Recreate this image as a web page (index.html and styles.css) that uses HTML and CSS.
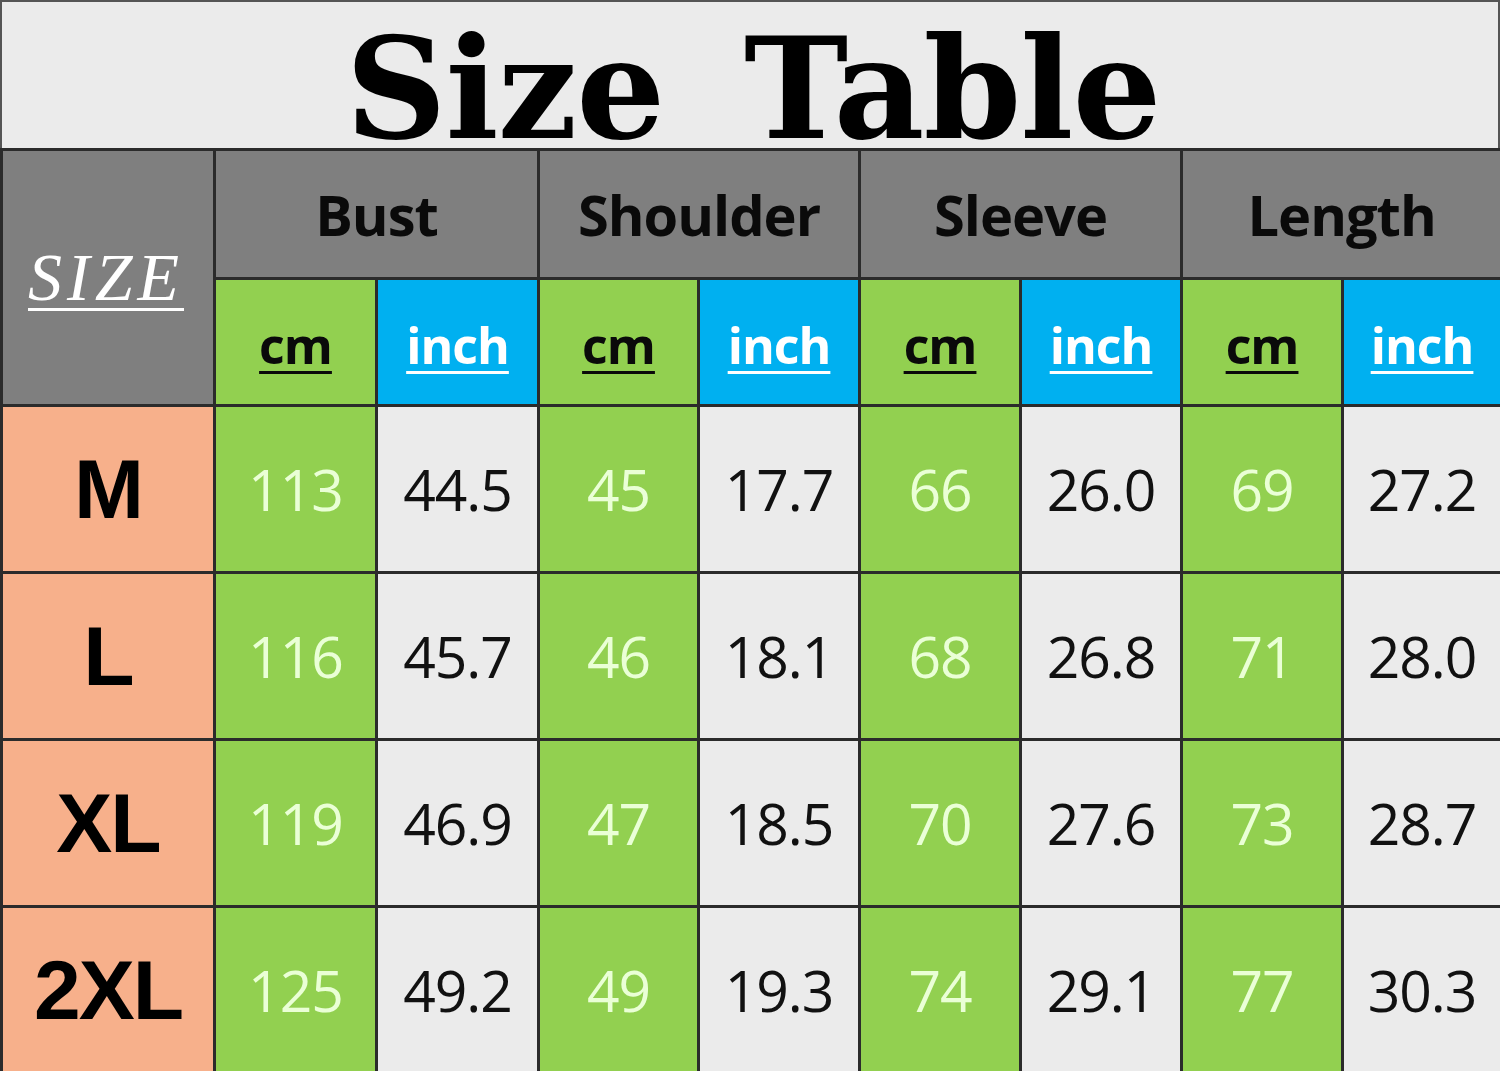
FILE: index.html
```html
<!DOCTYPE html>
<html>
<head>
<meta charset="utf-8">
<link rel="stylesheet" href="styles.css">
</head>
<body>
<div class="sheet">
  <div class="title"><span>Size Table</span></div>
  <table class="sizes">
    <colgroup>
      <col class="c-size">
      <col class="c-a"><col class="c-a"><col class="c-b"><col class="c-c">
      <col class="c-c"><col class="c-c"><col class="c-c"><col class="c-d">
    </colgroup>
    <tr class="head1">
      <th rowspan="2" class="size-h"><span>SIZE</span></th>
      <th colspan="2" class="grp">Bust</th>
      <th colspan="2" class="grp">Shoulder</th>
      <th colspan="2" class="grp">Sleeve</th>
      <th colspan="2" class="grp">Length</th>
    </tr>
    <tr class="head2">
      <th class="unit cm"><span>cm</span></th><th class="unit inch"><span>inch</span></th>
      <th class="unit cm"><span>cm</span></th><th class="unit inch"><span>inch</span></th>
      <th class="unit cm"><span>cm</span></th><th class="unit inch"><span>inch</span></th>
      <th class="unit cm"><span>cm</span></th><th class="unit inch"><span>inch</span></th>
    </tr>
    <tr class="row">
      <th class="lbl">M</th>
      <td class="g">113</td><td class="w">44.5</td><td class="g">45</td><td class="w">17.7</td>
      <td class="g">66</td><td class="w">26.0</td><td class="g">69</td><td class="w">27.2</td>
    </tr>
    <tr class="row">
      <th class="lbl">L</th>
      <td class="g">116</td><td class="w">45.7</td><td class="g">46</td><td class="w">18.1</td>
      <td class="g">68</td><td class="w">26.8</td><td class="g">71</td><td class="w">28.0</td>
    </tr>
    <tr class="row">
      <th class="lbl">XL</th>
      <td class="g">119</td><td class="w">46.9</td><td class="g">47</td><td class="w">18.5</td>
      <td class="g">70</td><td class="w">27.6</td><td class="g">73</td><td class="w">28.7</td>
    </tr>
    <tr class="row">
      <th class="lbl">2XL</th>
      <td class="g">125</td><td class="w">49.2</td><td class="g">49</td><td class="w">19.3</td>
      <td class="g">74</td><td class="w">29.1</td><td class="g">77</td><td class="w">30.3</td>
    </tr>
  </table>
</div>
</body>
</html>
```
FILE: styles.css
```css
html, body {
  margin: 0;
  padding: 0;
  background: #ffffff;
}
.sheet {
  width: 1500px;
  height: 1071px;
  overflow: hidden;
}
.title {
  height: 148px;
  box-sizing: border-box;
  background: #ebebeb;
  border-top: 2px solid #555;
  border-left: 2px solid #555;
  border-right: 2px solid #555;
  display: flex;
  align-items: flex-start;
  justify-content: center;
  padding-top: 32px;
}
.title span {
  font-family: "DejaVu Serif", "Liberation Serif", serif;
  font-weight: bold;
  font-size: 140px;
  line-height: 110px;
  color: #000;
  word-spacing: 32px;
  letter-spacing: -1px;
  margin-left: 6px;
}
.sizes {
  width: 1500px;
  table-layout: fixed;
  border-collapse: collapse;
  border-spacing: 0;
}
.c-size { width: 213px; }
.c-a { width: 162px; }
.c-b { width: 160px; }
.c-c { width: 161px; }
.c-d { width: 159px; }
.sizes th, .sizes td {
  border: 3px solid #2b2b2b;
  padding: 0;
  text-align: center;
  vertical-align: middle;
}
.head1 { height: 129px; }
.head2 { height: 127px; }
.row { height: 167px; }
.size-h {
  background: #7f7f7f;
}
.size-h span {
  font-family: "Liberation Serif", serif;
  font-style: italic;
  font-weight: normal;
  font-size: 68px;
  letter-spacing: 5px;
  color: #ffffff;
  text-decoration: underline;
  text-decoration-thickness: 3px;
  text-underline-offset: 8px;
  display: inline-block;
  margin-left: -4px;
}
.grp {
  background: #7f7f7f;
  font-family: "Open Sans", sans-serif;
  font-weight: bold;
  font-size: 56px;
  color: #0a0a0a;
  letter-spacing: -1px;
}
.unit span {
  font-family: "Open Sans", sans-serif;
  font-weight: bold;
  font-size: 50px;
  letter-spacing: -1px;
  text-decoration: underline;
  text-decoration-thickness: 3px;
  text-underline-offset: 7px;
  display: inline-block;
  margin-top: 6px;
}
.unit.cm { background: #92d050; }
.unit.cm span { color: #0a0a0a; }
.unit.inch { background: #00b0f0; }
.unit.inch span { color: #ffffff; }
.lbl {
  background: #f7b08b;
  font-family: "Liberation Sans", Arial, sans-serif;
  font-weight: bold;
  font-size: 84px;
  color: #000;
  letter-spacing: -2px;
}
.g, .w {
  font-family: "Open Sans", sans-serif;
  font-size: 57px;
  letter-spacing: -1px;
  padding-top: 14px;
}
.g {
  background: #92d050;
  color: #eaffd6;
}
.w {
  background: #ebebeb;
  color: #111;
}
```
